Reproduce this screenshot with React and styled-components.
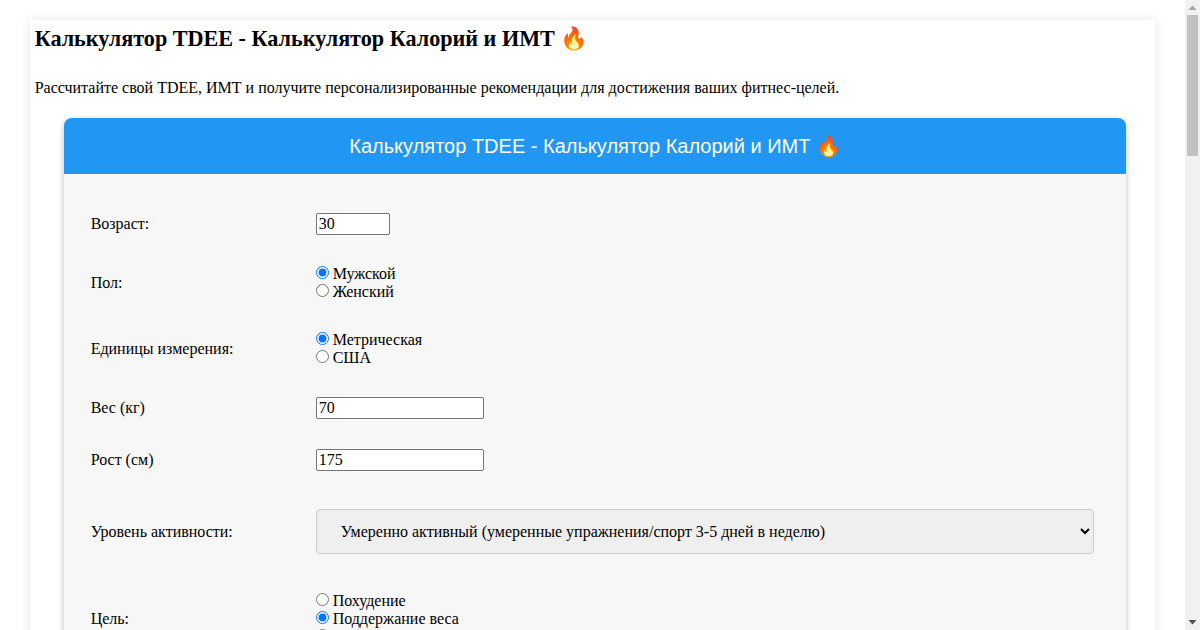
import styled, { createGlobalStyle } from "styled-components";

const GlobalStyle = createGlobalStyle`
    html {
        background: #fff;
    }
    body {
        margin: 0 15px 0 0;
        padding: 0;
        font-family: "Liberation Serif", "Times New Roman", serif;
        font-size: 16px;
        color: #000;
    }
`;

const Page = styled.div`
    width: 95%;
    min-height: 2640px;
    margin: 20px auto;
    padding: 5px;
    box-sizing: border-box;
    background: #fff;
    box-shadow: 0 0 10px rgba(0, 0, 0, 0.1);
`;

const Title = styled.h1`
    font-size: 22.16px;
    font-weight: bold;
    line-height: 27px;
    margin: 0;
`;

const Intro = styled.p`
    margin: 27px 0 21px;
    line-height: 18px;
`;

const Widget = styled.div`
    width: 1062px;
    margin-left: 29px;
    border-radius: 8px;
    background: #f7f7f7;
    box-shadow: 0 2px 6px rgba(0, 0, 0, 0.25);
`;

const WidgetHeader = styled.div`
    height: 56px;
    padding-left: 1px;
    display: flex;
    align-items: center;
    justify-content: center;
    background: #2196f3;
    color: #fff;
    font-family: "Liberation Sans", Arial, sans-serif;
    font-size: 20px;
    border-radius: 8px 8px 0 0;
`;

const Form = styled.form`
    padding: 24px 32px 40px 27px;
`;

const Row = styled.div`
    display: flex;
    align-items: center;
    padding: 15px 0;
`;

const Label = styled.label`
    flex: 0 0 225px;
`;

const Field = styled.div`
    flex: 1;
    min-width: 0;
`;

const NumberInput = styled.input`
    display: block;
    box-sizing: border-box;
    width: ${props => props.$width}px;
    height: 22px;
    padding: 1px;
    font-family: inherit;
    font-size: 16px;
`;

const RadioLine = styled.label`
    display: flex;
    align-items: flex-start;
    height: 18px;
    line-height: 18px;
`;

const Radio = styled.input`
    margin: 1px 4px 0 0;
`;

const Select = styled.select`
    display: block;
    box-sizing: border-box;
    width: 100%;
    height: 45px;
    margin: 8px 0;
    padding: 0 20px;
    background-color: #efefef;
    border: 1px solid #ccc;
    border-radius: 4px;
    font-family: inherit;
    font-size: 16px;
    color: #000;
`;

const SubmitButton = styled.button`
    padding: 12px 24px;
    background: #2196f3;
    color: #fff;
    border: 0;
    border-radius: 4px;
    font-family: inherit;
    font-size: 16px;
`;

const Scrollbar = styled.div`
    position: fixed;
    top: 0;
    right: 0;
    bottom: 0;
    width: 15px;
    background: #f1f1f1;
    display: flex;
    flex-direction: column;
    align-items: center;
`;

const ScrollButton = styled.svg`
    display: block;
    flex: 0 0 15px;
    width: 15px;
    height: 15px;
    fill: ${props => props.$color};
`;

const Thumb = styled.div`
    width: 11px;
    height: 141px;
    background: #c1c1c1;
`;

const Spacer = styled.div`
    flex: 1;
`;

const RadioGroup = ({ name, options, checked }) => (
    <Field>
        {options.map(option => (
            <RadioLine key={option}>
                <Radio type="radio" name={name} defaultChecked={option === checked} />
                {option}
            </RadioLine>
        ))}
    </Field>
);

const App = () => {
    return (
        <>
            <GlobalStyle />
            <Page>
                <Title>Калькулятор TDEE - Калькулятор Калорий и ИМТ 🔥</Title>
                <Intro>Рассчитайте свой TDEE, ИМТ и получите персонализированные рекомендации для достижения ваших фитнес-целей.</Intro>
                <Widget>
                    <WidgetHeader>Калькулятор TDEE - Калькулятор Калорий и ИМТ 🔥</WidgetHeader>
                    <Form>
                        <Row>
                            <Label>Возраст:</Label>
                            <Field><NumberInput $width={74} type="number" defaultValue="30" /></Field>
                        </Row>
                        <Row>
                            <Label>Пол:</Label>
                            <RadioGroup name="sex" options={["Мужской", "Женский"]} checked="Мужской" />
                        </Row>
                        <Row>
                            <Label>Единицы измерения:</Label>
                            <RadioGroup name="units" options={["Метрическая", "США"]} checked="Метрическая" />
                        </Row>
                        <Row>
                            <Label>Вес (кг)</Label>
                            <Field><NumberInput $width={168} type="number" defaultValue="70" /></Field>
                        </Row>
                        <Row>
                            <Label>Рост (см)</Label>
                            <Field><NumberInput $width={168} type="number" defaultValue="175" /></Field>
                        </Row>
                        <Row>
                            <Label>Уровень активности:</Label>
                            <Field>
                                <Select defaultValue="moderate">
                                    <option value="moderate">Умеренно активный (умеренные упражнения/спорт 3-5 дней в неделю)</option>
                                </Select>
                            </Field>
                        </Row>
                        <Row>
                            <Label>Цель:</Label>
                            <RadioGroup name="goal" options={["Похудение", "Поддержание веса", "Набор веса"]} checked="Поддержание веса" />
                        </Row>
                        <SubmitButton type="button">Рассчитать</SubmitButton>
                    </Form>
                </Widget>
            </Page>
            <Scrollbar>
                <ScrollButton $color="#a3a3a3" viewBox="0 0 15 15"><path d="M7.5 5.5 L11.5 10 H3.5 Z" /></ScrollButton>
                <Thumb />
                <Spacer />
                <ScrollButton $color="#505050" viewBox="0 0 15 15"><path d="M3.5 5 H11.5 L7.5 9.5 Z" /></ScrollButton>
            </Scrollbar>
        </>
    );
};

export default App;
